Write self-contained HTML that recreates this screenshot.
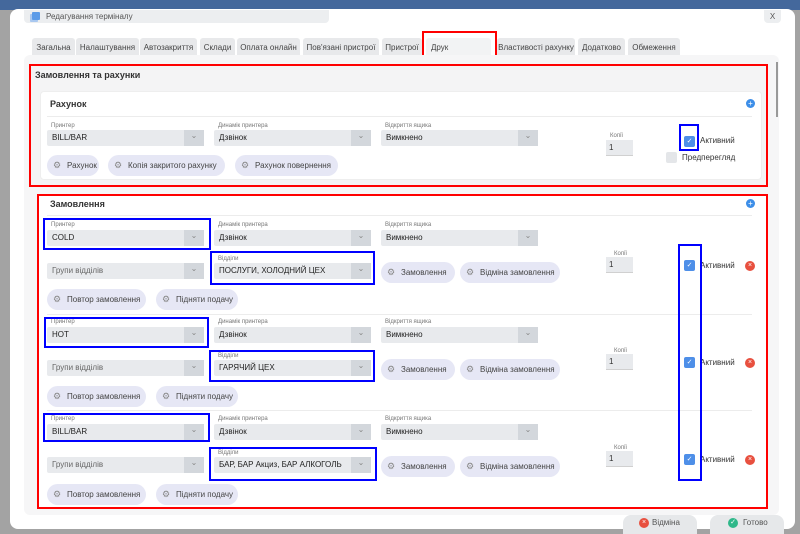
<!DOCTYPE html>
<html><head><meta charset="utf-8"><style>
*{box-sizing:border-box;margin:0;padding:0}
body{width:800px;height:534px;overflow:hidden;background:#a3a3a3;font-family:"Liberation Sans",sans-serif;color:#333;position:relative}
.a{position:absolute}
.sel{position:absolute;height:16px;background:#e8eaed;border-radius:2px;font-size:8px;line-height:16px;padding-left:5px;color:#222}
.sel:after{content:"⌄";position:absolute;right:0;top:0;width:20px;height:16px;background:#d3d7dc;color:#888;font-size:8px;text-align:center;line-height:12px}
.sel.ph{color:#666}
.lbl{position:absolute;font-size:6px;color:#777}
.btn{position:absolute;height:21px;background:#e6e7f5;border-radius:11px;font-size:8px;line-height:21px;padding-left:20px;color:#444;white-space:nowrap}
.btn:before{content:"⚙";position:absolute;left:6px;top:0;font-size:9px;color:#888}
.inp{position:absolute;width:27px;height:16px;background:#e8eaed;font-size:8px;line-height:16px;padding-left:3px;border-bottom:1px solid #d0d0d0}
.cb{position:absolute;width:11px;height:11px;background:#4e8fe8;border-radius:2px;color:#fff;font-size:7px;line-height:11px;text-align:center}
.t{position:absolute;font-size:8px;white-space:nowrap}
.x{position:absolute;width:10px;height:10px;border-radius:50%;background:#e8503f;color:#fff;font-size:7px;line-height:10px;text-align:center}
.tab{position:absolute;top:38px;height:19px;background:#e8e9eb;border-radius:3px 3px 0 0;font-size:8px;line-height:19px;text-align:center;color:#444}
.rb{position:absolute;border:2px solid #f00}
.bb{position:absolute;border:2px solid #00f}
.hr{position:absolute;height:1px;background:#ececec}
</style></head><body>
<div class="a" style="left:0;top:0;width:800px;height:10px;background:#44689c"></div>
<div class="a" style="left:10px;top:9px;width:785px;height:520px;background:#fff;border-radius:8px"></div>
<div class="a" style="left:24px;top:10px;width:305px;height:13px;background:#eceef0;border-radius:0 0 4px 4px"></div>
<div class="a" style="left:32px;top:12px;width:8px;height:8px;background:#5b9be8;border-radius:1px;box-shadow:-2px 2px 0 #a9c8f0"></div>
<div class="t" style="left:46px;top:12px;font-size:8px;color:#555">Редагування терміналу</div>
<div class="a" style="left:764px;top:10px;width:17px;height:13px;background:#eceef0;border-radius:0 0 4px 4px;font-size:8px;text-align:center;line-height:13px;color:#555">X</div>

<div class="tab" style="left:32px;width:43px">Загальна</div>
<div class="tab" style="left:76px;width:63px">Налаштування</div>
<div class="tab" style="left:140px;width:57px">Автозакриття</div>
<div class="tab" style="left:200px;width:35px">Склади</div>
<div class="tab" style="left:237px;width:63px">Оплата онлайн</div>
<div class="tab" style="left:303px;width:76px">Пов'язані пристрої</div>
<div class="tab" style="left:382px;width:40px">Пристрої</div>
<div class="tab" style="left:426px;width:65px;background:#f2f3f4;text-align:left;padding-left:5px">Друк</div>
<div class="tab" style="left:497px;width:78px">Властивості рахунку</div>
<div class="tab" style="left:578px;width:47px">Додатково</div>
<div class="tab" style="left:628px;width:52px">Обмеження</div>
<div class="rb" style="left:422px;top:31px;width:75px;height:28px"></div>

<div class="a" style="left:24px;top:55px;width:755px;height:460px;background:#f6f6f7;border-radius:6px"></div>
<div class="a" style="left:776px;top:62px;width:2px;height:55px;background:#999"></div>

<!-- section 1 -->
<div class="a" style="left:30px;top:65px;width:736px;height:120px;background:#f4f4f5"></div>
<div class="t" style="left:35px;top:70px;font-size:9px;font-weight:bold;color:#333">Замовлення та рахунки</div>
<div class="a" style="left:40px;top:91px;width:722px;height:89px;background:#fff;border:1px solid #eee;border-radius:4px"></div>
<div class="t" style="left:50px;top:99px;font-size:9px;font-weight:bold">Рахунок</div>
<div class="a" style="left:746px;top:99px;width:9px;height:9px;border-radius:50%;background:#3d8ee8;color:#fff;font-size:8px;line-height:9px;text-align:center">+</div>
<div class="hr" style="left:47px;top:116px;width:705px"></div>
<div class="lbl" style="left:51px;top:123px">Принтер</div>
<div class="sel" style="left:47px;top:130px;width:157px">BILL/BAR</div>
<div class="lbl" style="left:218px;top:123px">Динамік принтера</div>
<div class="sel" style="left:214px;top:130px;width:157px">Дзвінок</div>
<div class="lbl" style="left:385px;top:123px">Відкриття ящика</div>
<div class="sel" style="left:381px;top:130px;width:157px">Вимкнено</div>
<div class="lbl" style="left:610px;top:133px">Копії</div>
<div class="inp" style="left:606px;top:140px">1</div>
<div class="cb" style="left:684px;top:136px">✓</div>
<div class="t" style="left:700px;top:136px">Активний</div>
<div class="a" style="left:666px;top:152px;width:11px;height:11px;background:#e4e6e9;border-radius:2px"></div>
<div class="t" style="left:682px;top:153px">Предперегляд</div>
<div class="bb" style="left:679px;top:124px;width:20px;height:27px"></div>
<div class="btn" style="left:47px;top:155px;width:52px">Рахунок</div>
<div class="btn" style="left:108px;top:155px;width:117px">Копія закритого рахунку</div>
<div class="btn" style="left:235px;top:155px;width:103px">Рахунок повернення</div>
<div class="rb" style="left:29px;top:64px;width:739px;height:123px"></div>

<!-- section 2 -->
<div class="a" style="left:38px;top:195px;width:728px;height:312px;background:#fff"></div>
<div class="t" style="left:50px;top:199px;font-size:9px;font-weight:bold">Замовлення</div>
<div class="a" style="left:746px;top:199px;width:9px;height:9px;border-radius:50%;background:#3d8ee8;color:#fff;font-size:8px;line-height:9px;text-align:center">+</div>
<div class="hr" style="left:47px;top:215px;width:705px"></div>

<!-- group 1 -->
<div class="lbl" style="left:51px;top:222px">Принтер</div>
<div class="sel" style="left:47px;top:230px;width:157px">COLD</div>
<div class="lbl" style="left:218px;top:222px">Динамік принтера</div>
<div class="sel" style="left:214px;top:230px;width:157px">Дзвінок</div>
<div class="lbl" style="left:385px;top:222px">Відкриття ящика</div>
<div class="sel" style="left:381px;top:230px;width:157px">Вимкнено</div>
<div class="sel ph" style="left:47px;top:263px;width:157px">Групи відділів</div>
<div class="lbl" style="left:218px;top:256px">Відділи</div>
<div class="sel" style="left:214px;top:263px;width:157px">ПОСЛУГИ, ХОЛОДНИЙ ЦЕХ</div>
<div class="btn" style="left:381px;top:262px;width:74px">Замовлення</div>
<div class="btn" style="left:460px;top:262px;width:100px">Відміна замовлення</div>
<div class="lbl" style="left:614px;top:251px">Копії</div>
<div class="inp" style="left:606px;top:257px">1</div>
<div class="cb" style="left:684px;top:260px">✓</div>
<div class="t" style="left:700px;top:261px">Активний</div>
<div class="x" style="left:745px;top:261px">×</div>
<div class="btn" style="left:47px;top:289px;width:99px">Повтор замовлення</div>
<div class="btn" style="left:156px;top:289px;width:82px">Підняти подачу</div>
<div class="bb" style="left:43px;top:218px;width:168px;height:32px"></div>
<div class="bb" style="left:210px;top:251px;width:165px;height:34px"></div>
<div class="hr" style="left:47px;top:314px;width:705px"></div>

<!-- group 2 -->
<div class="lbl" style="left:51px;top:319px">Принтер</div>
<div class="sel" style="left:47px;top:327px;width:157px">HOT</div>
<div class="lbl" style="left:218px;top:319px">Динамік принтера</div>
<div class="sel" style="left:214px;top:327px;width:157px">Дзвінок</div>
<div class="lbl" style="left:385px;top:319px">Відкриття ящика</div>
<div class="sel" style="left:381px;top:327px;width:157px">Вимкнено</div>
<div class="sel ph" style="left:47px;top:360px;width:157px">Групи відділів</div>
<div class="lbl" style="left:218px;top:353px">Відділи</div>
<div class="sel" style="left:214px;top:360px;width:157px">ГАРЯЧИЙ ЦЕХ</div>
<div class="btn" style="left:381px;top:359px;width:74px">Замовлення</div>
<div class="btn" style="left:460px;top:359px;width:100px">Відміна замовлення</div>
<div class="lbl" style="left:614px;top:348px">Копії</div>
<div class="inp" style="left:606px;top:354px">1</div>
<div class="cb" style="left:684px;top:357px">✓</div>
<div class="t" style="left:700px;top:358px">Активний</div>
<div class="x" style="left:745px;top:358px">×</div>
<div class="btn" style="left:47px;top:386px;width:99px">Повтор замовлення</div>
<div class="btn" style="left:156px;top:386px;width:82px">Підняти подачу</div>
<div class="bb" style="left:44px;top:317px;width:165px;height:31px"></div>
<div class="bb" style="left:209px;top:350px;width:166px;height:32px"></div>
<div class="hr" style="left:47px;top:410px;width:705px"></div>

<!-- group 3 -->
<div class="lbl" style="left:51px;top:416px">Принтер</div>
<div class="sel" style="left:47px;top:424px;width:157px">BILL/BAR</div>
<div class="lbl" style="left:218px;top:416px">Динамік принтера</div>
<div class="sel" style="left:214px;top:424px;width:157px">Дзвінок</div>
<div class="lbl" style="left:385px;top:416px">Відкриття ящика</div>
<div class="sel" style="left:381px;top:424px;width:157px">Вимкнено</div>
<div class="sel ph" style="left:47px;top:457px;width:157px">Групи відділів</div>
<div class="lbl" style="left:218px;top:450px">Відділи</div>
<div class="sel" style="left:214px;top:457px;width:157px">БАР, БАР Акциз, БАР АЛКОГОЛЬ</div>
<div class="btn" style="left:381px;top:456px;width:74px">Замовлення</div>
<div class="btn" style="left:460px;top:456px;width:100px">Відміна замовлення</div>
<div class="lbl" style="left:614px;top:445px">Копії</div>
<div class="inp" style="left:606px;top:451px">1</div>
<div class="cb" style="left:684px;top:454px">✓</div>
<div class="t" style="left:700px;top:455px">Активний</div>
<div class="x" style="left:745px;top:455px">×</div>
<div class="btn" style="left:47px;top:484px;width:99px">Повтор замовлення</div>
<div class="btn" style="left:156px;top:484px;width:82px">Підняти подачу</div>
<div class="bb" style="left:43px;top:413px;width:167px;height:29px"></div>
<div class="bb" style="left:209px;top:447px;width:168px;height:34px"></div>

<div class="bb" style="left:678px;top:244px;width:24px;height:237px"></div>
<div class="rb" style="left:37px;top:194px;width:731px;height:315px"></div>

<!-- footer -->
<div class="a" style="left:623px;top:515px;width:74px;height:19px;background:#e6e8ea;border-radius:8px 8px 0 0;font-size:8px;line-height:16px;padding-left:29px;color:#555">Відміна</div>
<div class="x" style="left:639px;top:518px">×</div>
<div class="a" style="left:710px;top:515px;width:74px;height:19px;background:#e6e8ea;border-radius:8px 8px 0 0;font-size:8px;line-height:16px;padding-left:33px;color:#555">Готово</div>
<div class="x" style="left:728px;top:518px;background:#2fb88a">✓</div>
</body></html>
